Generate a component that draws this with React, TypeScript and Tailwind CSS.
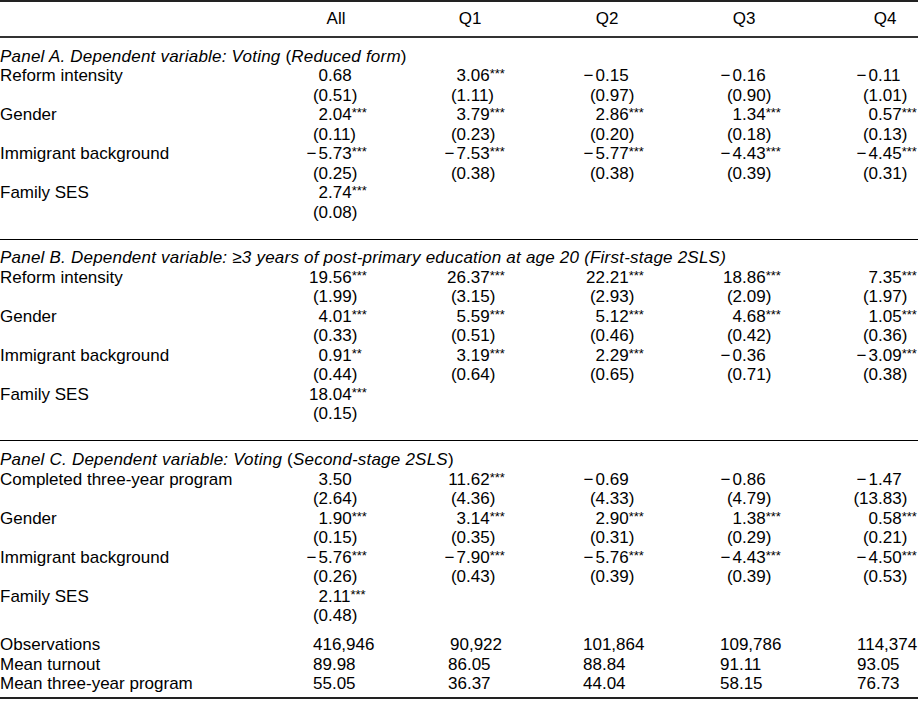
type Cell = string;

type Row = { label: string; values: Cell[] };

// decimal point sits 40px into every column; rest widths chain the columns together
const restW = ['w-[98px]', 'w-[99px]', 'w-[97px]', 'w-[96px]', 'w-[40px]'];
const colW = ['w-[138px]', 'w-[139px]', 'w-[137px]', 'w-[136px]', 'w-[80px]'];
const headOffset = ['ml-[8px]', 'ml-[4px]', 'ml-[2px]', 'ml-[2px]', 'ml-[7px]'];
const plainOffset = ['pl-[25px]', 'pl-[22px]', 'pl-[18px]', 'pl-[18px]', 'pl-[19px]'];

const panelA: Row[] = [
  { label: 'Reform intensity', values: ['0.68', '3.06***', '−0.15', '−0.16', '−0.11'] },
  { label: '', values: ['(0.51)', '(1.11)', '(0.97)', '(0.90)', '(1.01)'] },
  { label: 'Gender', values: ['2.04***', '3.79***', '2.86***', '1.34***', '0.57***'] },
  { label: '', values: ['(0.11)', '(0.23)', '(0.20)', '(0.18)', '(0.13)'] },
  { label: 'Immigrant background', values: ['−5.73***', '−7.53***', '−5.77***', '−4.43***', '−4.45***'] },
  { label: '', values: ['(0.25)', '(0.38)', '(0.38)', '(0.39)', '(0.31)'] },
  { label: 'Family SES', values: ['2.74***', '', '', '', ''] },
  { label: '', values: ['(0.08)', '', '', '', ''] },
];

const panelB: Row[] = [
  { label: 'Reform intensity', values: ['19.56***', '26.37***', '22.21***', '18.86***', '7.35***'] },
  { label: '', values: ['(1.99)', '(3.15)', '(2.93)', '(2.09)', '(1.97)'] },
  { label: 'Gender', values: ['4.01***', '5.59***', '5.12***', '4.68***', '1.05***'] },
  { label: '', values: ['(0.33)', '(0.51)', '(0.46)', '(0.42)', '(0.36)'] },
  { label: 'Immigrant background', values: ['0.91**', '3.19***', '2.29***', '−0.36', '−3.09***'] },
  { label: '', values: ['(0.44)', '(0.64)', '(0.65)', '(0.71)', '(0.38)'] },
  { label: 'Family SES', values: ['18.04***', '', '', '', ''] },
  { label: '', values: ['(0.15)', '', '', '', ''] },
];

const panelC: Row[] = [
  { label: 'Completed three-year program', values: ['3.50', '11.62***', '−0.69', '−0.86', '−1.47'] },
  { label: '', values: ['(2.64)', '(4.36)', '(4.33)', '(4.79)', '(13.83)'] },
  { label: 'Gender', values: ['1.90***', '3.14***', '2.90***', '1.38***', '0.58***'] },
  { label: '', values: ['(0.15)', '(0.35)', '(0.31)', '(0.29)', '(0.21)'] },
  { label: 'Immigrant background', values: ['−5.76***', '−7.90***', '−5.76***', '−4.43***', '−4.50***'] },
  { label: '', values: ['(0.26)', '(0.43)', '(0.39)', '(0.39)', '(0.53)'] },
  { label: 'Family SES', values: ['2.11***', '', '', '', ''] },
  { label: '', values: ['(0.48)', '', '', '', ''] },
];

const summary: Row[] = [
  { label: 'Observations', values: ['416,946', '90,922', '101,864', '109,786', '114,374'] },
  { label: 'Mean turnout', values: ['89.98', '86.05', '88.84', '91.11', '93.05'] },
  { label: 'Mean three-year program', values: ['55.05', '36.37', '44.04', '58.15', '76.73'] },
];

function IntPart({ text }: { text: string }) {
  if (text.startsWith('−')) {
    return (
      <>
        <span className="mr-[2px]">−</span>
        {text.slice(1)}
      </>
    );
  }
  return <>{text}</>;
}

function Num({ value, col }: { value: Cell; col: number }) {
  const m = value.match(/^(.*?)(\*+)?$/);
  const base = m ? m[1] : value;
  const stars = m && m[2] ? m[2] : '';
  const dot = base.indexOf('.');
  const intPart = dot >= 0 ? base.slice(0, dot) : base;
  const rest = dot >= 0 ? base.slice(dot) : '';
  return (
    <>
      <span className="w-[40px] shrink-0 text-right whitespace-nowrap">
        <IntPart text={intPart} />
      </span>
      <span className={`${restW[col]} shrink-0 whitespace-nowrap`}>
        {rest}
        {stars && (
          <span className="relative -top-[3px] text-[13px] leading-none">{stars}</span>
        )}
      </span>
    </>
  );
}

function DataRow({ row }: { row: Row }) {
  return (
    <div className="flex h-[19.5px] items-center leading-[19.5px]">
      <div className="w-[288px] shrink-0 whitespace-nowrap">{row.label}</div>
      {row.values.map((v, i) => (
        <Num key={i} value={v} col={i} />
      ))}
    </div>
  );
}

function PlainRow({ row, first }: { row: Row; first?: boolean }) {
  return (
    <div className="flex h-[19.5px] items-center leading-[19.5px]">
      <div className="w-[288px] shrink-0 whitespace-nowrap">{row.label}</div>
      {row.values.map((v, i) => (
        <div
          key={i}
          className={`${colW[i]} shrink-0 whitespace-nowrap ${
            first && i === 1 ? 'pl-[24px]' : plainOffset[i]
          }`}
        >
          {v}
        </div>
      ))}
    </div>
  );
}

function PanelTitle({ children }: { children: React.ReactNode }) {
  return (
    <div className="h-[19.5px] whitespace-nowrap leading-[19.5px] tracking-[0.22px]">
      {children}
    </div>
  );
}

export default function App() {
  const heads = ['All', 'Q1', 'Q2', 'Q3', 'Q4'];
  return (
    <div
      className="h-[702px] w-[918px] overflow-hidden bg-white text-[17px] text-black"
      style={{ fontFamily: '"Liberation Sans", Arial, Helvetica, sans-serif' }}
    >
      <div className="border-t-2 border-[#222]">
        {/* Header */}
        <div className="flex h-[34px] items-center">
          <div className="w-[288px] shrink-0" />
          {heads.map((h, i) => (
            <div key={h} className={`${colW[i]} shrink-0`}>
              <div className={`w-[80px] text-center ${headOffset[i]}`}>{h}</div>
            </div>
          ))}
        </div>

        {/* Panel A */}
        <div className="border-t-2 border-[#333] pt-[8.5px] pb-[17px]">
          <PanelTitle>
            <i>Panel A. Dependent variable: Voting</i> (<i>Reduced form</i>)
          </PanelTitle>
          {panelA.map((r, i) => (
            <DataRow key={i} row={r} />
          ))}
        </div>

        {/* Panel B */}
        <div className="border-t border-black pt-[8px] pb-[16.5px]">
          <PanelTitle>
            <i>Panel B. Dependent variable: </i>≥<i>3 years of post-primary education at age 20 (First-stage 2SLS)</i>
          </PanelTitle>
          {panelB.map((r, i) => (
            <DataRow key={i} row={r} />
          ))}
        </div>

        {/* Panel C + summary */}
        <div className="border-t border-black pt-[9px] pb-[3.5px]">
          <PanelTitle>
            <i>Panel C. Dependent variable: Voting</i> (<i>Second-stage 2SLS</i>)
          </PanelTitle>
          {panelC.map((r, i) => (
            <DataRow key={i} row={r} />
          ))}
          <div className="mt-[9.5px]">
            {summary.map((r, i) => (
              <PlainRow key={i} row={r} first={i === 0} />
            ))}
          </div>
        </div>
        <div className="border-t-2 border-[#222]" />
      </div>
    </div>
  );
}
